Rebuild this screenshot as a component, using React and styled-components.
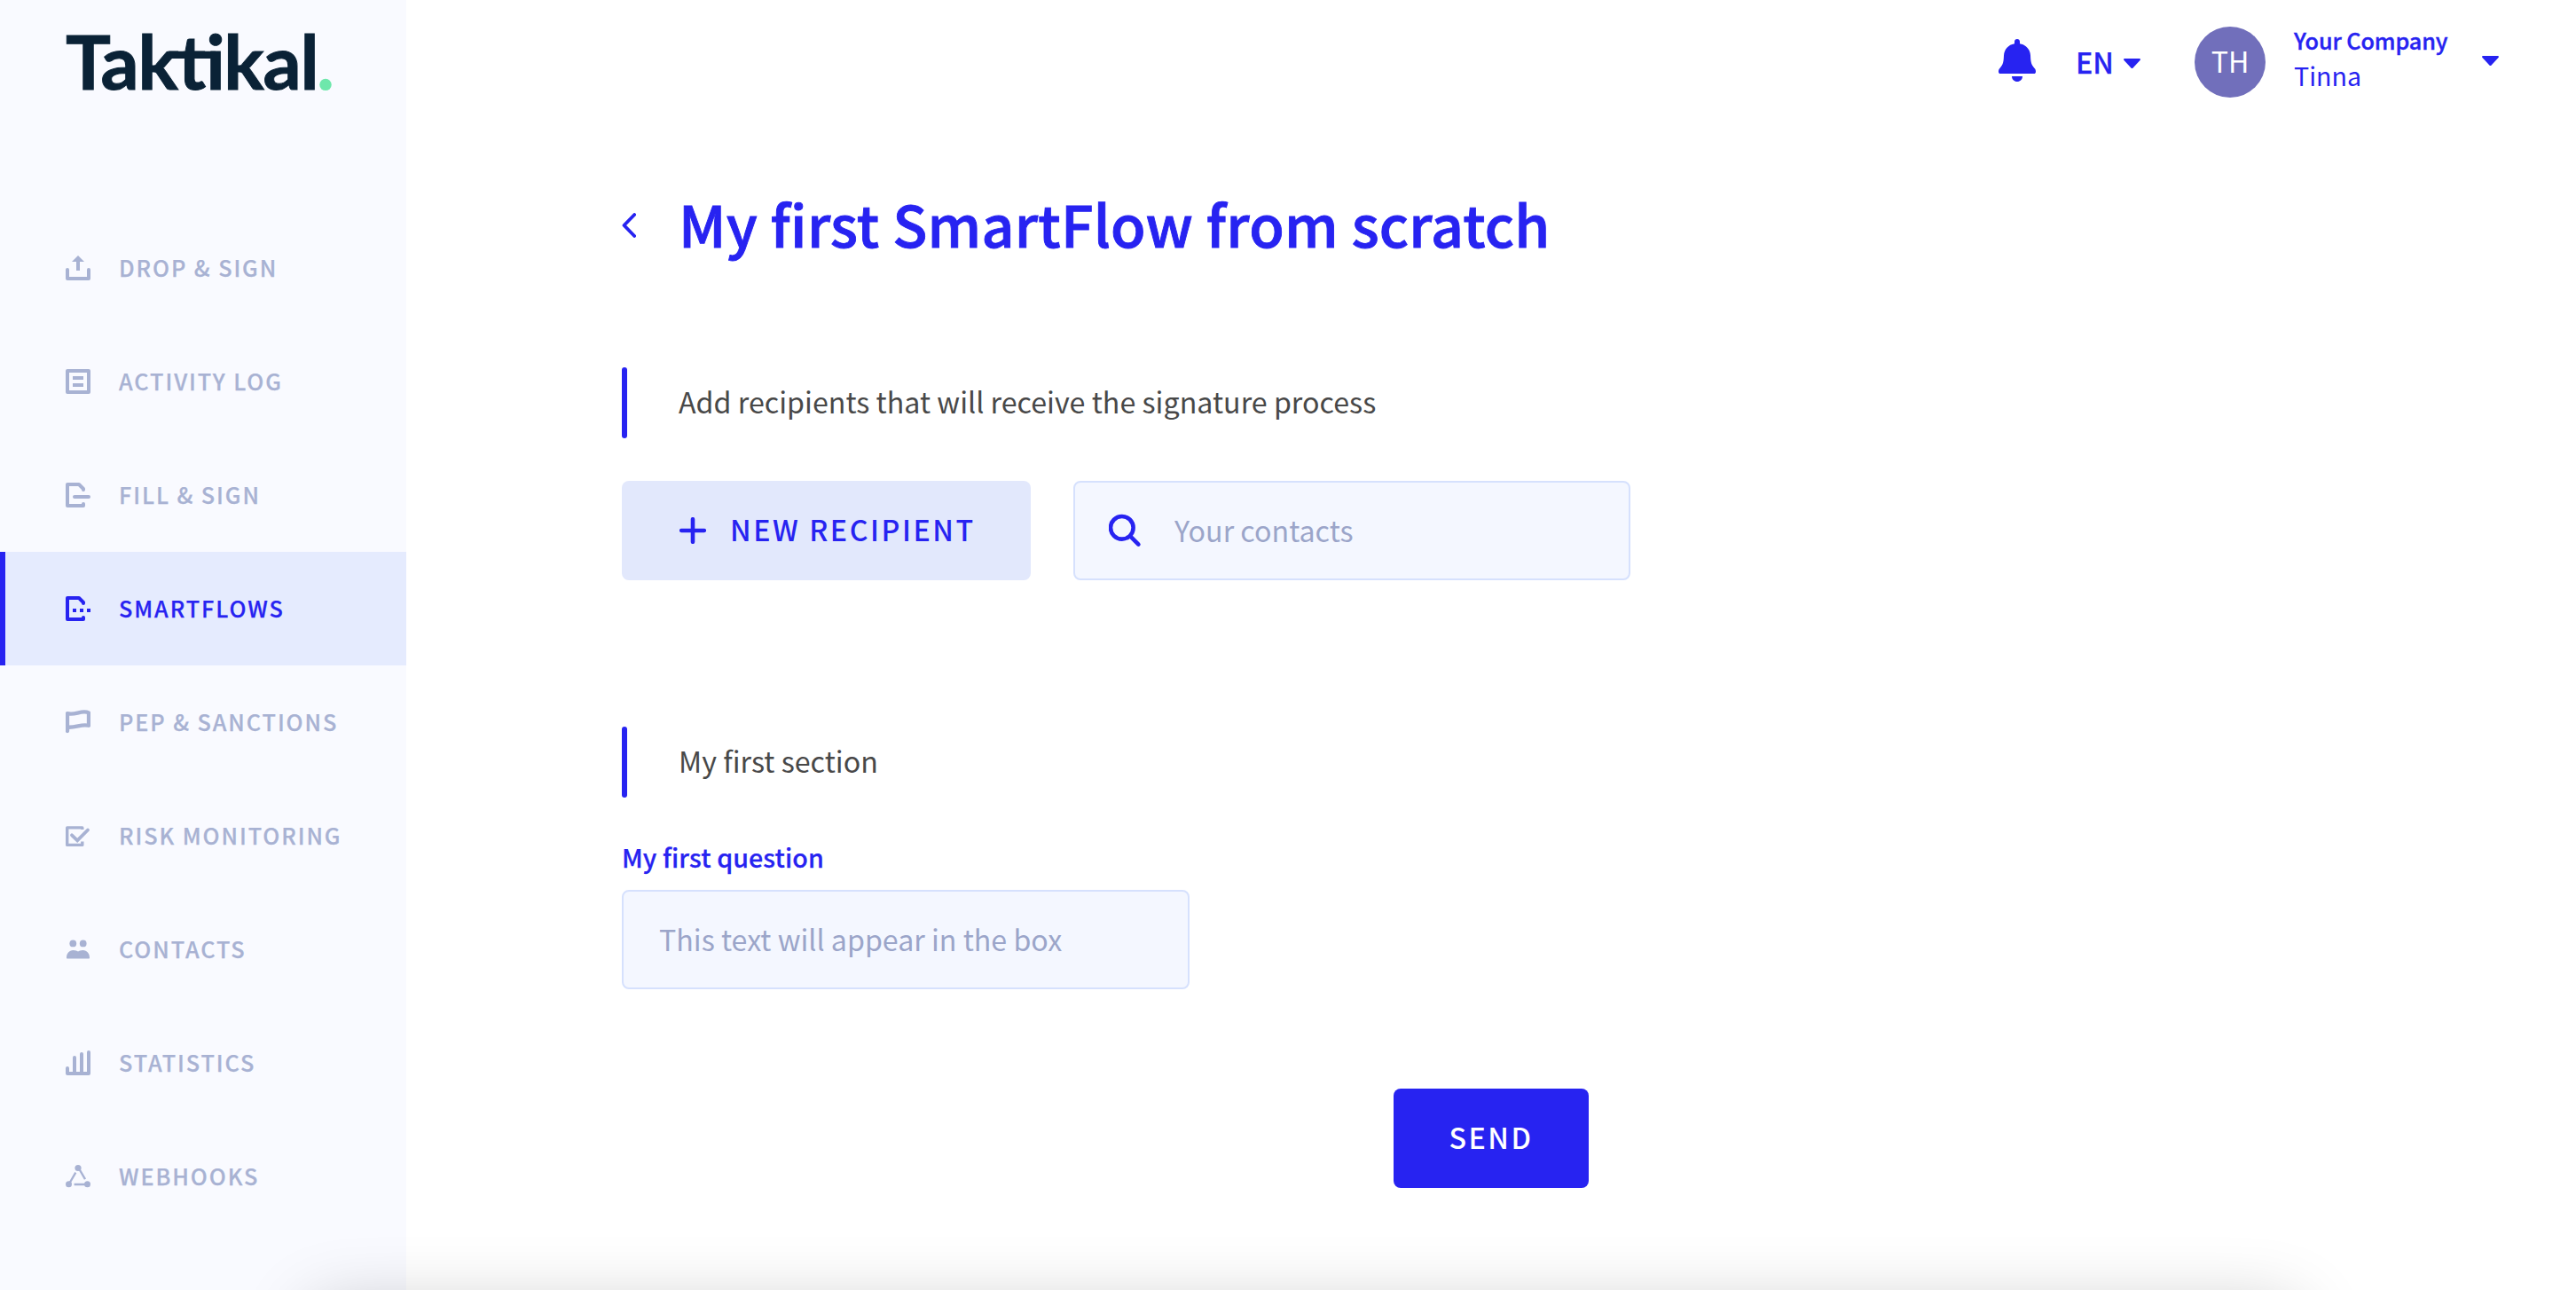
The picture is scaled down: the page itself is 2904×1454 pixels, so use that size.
import styled, { createGlobalStyle, css } from 'styled-components';

const colors = {
  primary: '#2723f1',
  muted: '#a8b2d3',
  placeholder: '#9ba5c9',
  text: '#484848',
  navy: '#0a2236',
  green: '#6ee7ab',
};

const GlobalStyle = createGlobalStyle`
  * {
    box-sizing: border-box;
  }
  html, body {
    margin: 0;
    padding: 0;
    background: #fff;
  }
  body, button, input {
    font-family: 'Noto Sans CJK SC', 'Source Sans Pro', sans-serif;
  }
`;

// a touch heavier than medium
const semibold = css`
  font-weight: 500;
  -webkit-text-stroke: 0.25px currentColor;
`;

const Page = styled.div`
  position: relative;
  display: flex;
  width: 2904px;
  height: 1454px;
  overflow: hidden;
  background: #fff;
`;

// sidebar
const Sidebar = styled.aside`
  flex: none;
  width: 458px;
  background: #f9faff;
`;

const LogoBox = styled.div`
  height: 238px;
  padding-left: 66px;
`;

const LogoSvg = styled.svg`
  display: block;
  overflow: visible;
  font-family: Lato, sans-serif;
  font-size: 85px;
  font-weight: 700;
`;

const Nav = styled.nav`
  display: flex;
  flex-direction: column;
`;

const NavItem = styled.a`
  display: flex;
  align-items: center;
  gap: 32px;
  height: 128px;
  padding-left: 68px;
  border-left: 6px solid transparent;
  color: ${colors.muted};
  font-size: 25.2px;
  letter-spacing: 1.94px;
  line-height: 36px;
  white-space: nowrap;
  ${semibold}

  ${props =>
    props.$active &&
    css`
      border-left-color: ${colors.primary};
      background: #e5ebfe;
      color: ${colors.primary};
    `}
`;

const NavLabel = styled.span`
  padding-bottom: 2px;
`;

const NavIcon = styled.svg`
  flex: none;
  width: 28px;
  height: 28px;
  fill: none;
  stroke: currentColor;
  stroke-width: 4;
`;

// header
const Main = styled.main`
  flex: 1;
  display: flex;
  flex-direction: column;
`;

const Header = styled.header`
  display: flex;
  align-items: center;
  justify-content: flex-end;
  height: 140px;
  padding-right: 87px;
  color: ${colors.primary};
`;

const Bell = styled.svg`
  width: 42px;
  height: 48px;
  margin: 0 45px 4px 0;
`;

const Language = styled.div`
  display: flex;
  align-items: center;
  justify-content: space-between;
  width: 73px;
  margin-right: 61px;
  padding-bottom: 3px;
  font-size: 32.2px;
  line-height: 46px;
  ${semibold}
`;

const Caret = styled.svg`
  width: 19px;
  height: 11px;
  margin-top: ${props => props.$shift}px;
`;

const Avatar = styled.div`
  display: flex;
  align-items: center;
  justify-content: center;
  width: 80px;
  height: 80px;
  margin-right: 32px;
  padding-bottom: 4px;
  border-radius: 50%;
  background: #716fbb;
  color: #fff;
  font-size: 32.2px;
  line-height: 40px;
`;

const UserNames = styled.div`
  width: 212px;
  padding-bottom: 10px;
  font-size: 28.6px;
  line-height: 39px;
  white-space: nowrap;
`;

const Company = styled.div`
  font-size: 25.2px;
  letter-spacing: -0.1px;
  ${semibold}
  -webkit-text-stroke-width: 0.4px;
`;

// content
const Content = styled.section`
  display: flex;
  flex-direction: column;
  align-items: flex-start;
  width: 1333px;
  padding: 71px 0 0 243px;
`;

const TitleRow = styled.div`
  display: flex;
  align-items: center;
  gap: 48px;
  height: 80px;
  margin-bottom: 123px;
  color: ${colors.primary};
`;

const BackIcon = styled.svg`
  width: 16px;
  height: 28px;
  margin-top: 6px;
`;

const Title = styled.h1`
  margin: 0 0 1px;
  font-size: 64.4px;
  letter-spacing: 0.22px;
  line-height: 80px;
  white-space: nowrap;
  ${semibold}
  -webkit-text-stroke-width: 0.9px;
`;

const SectionTitle = styled.div`
  display: flex;
  gap: 58px;
  height: 80px;
  color: ${colors.text};
  font-size: 32.2px;
  line-height: 76px;
  letter-spacing: 0.02px;

  &::before {
    content: '';
    width: 6px;
    border-radius: 3px;
    background: ${colors.primary};
  }
`;

const RecipientRow = styled.div`
  display: flex;
  gap: 48px;
  margin: 48px 0 165px;
`;

const Button = styled.button`
  display: flex;
  align-items: center;
  justify-content: ${props => (props.$solid ? 'center' : 'flex-start')};
  gap: 27px;
  width: ${props => props.$width}px;
  height: 112px;
  padding: ${props => (props.$solid ? '0 0 4px' : '0 0 4px 65px')};
  border: 0;
  border-radius: 8px;
  background: ${props => (props.$solid ? colors.primary : '#e2e8fc')};
  color: ${props => (props.$solid ? '#fff' : colors.primary)};
  font-size: 32.2px;
  font-weight: 500;
  letter-spacing: 2.55px;
  line-height: 46px;
  white-space: nowrap;

  svg {
    margin-top: 3px;
  }
`;

const SendButton = styled(Button)`
  align-self: flex-end;
  margin: 112px 0 0;
`;

const Field = styled.label`
  display: flex;
  align-items: center;
  width: ${props => props.$width}px;
  height: 112px;
  padding: 0 38px 0 ${props => props.$indent}px;
  border: 2px solid #d6e1fd;
  border-radius: 8px;
  background: #f4f7ff;
`;

const SearchIcon = styled.svg`
  flex: none;
  width: 38px;
  height: 38px;
  margin-right: 36px;
`;

const Input = styled.input`
  flex: 1;
  min-width: 0;
  height: 46px;
  margin-bottom: 3px;
  padding: 0;
  border: 0;
  outline: 0;
  background: transparent;
  color: ${colors.text};
  font-size: 32.2px;
  line-height: 46px;

  &::placeholder {
    color: ${colors.placeholder};
    opacity: 1;
  }
`;

const Question = styled.div`
  margin: 47px 0 17px;
  color: ${colors.primary};
  font-size: 28.6px;
  letter-spacing: 0.1px;
  line-height: 40px;
  ${semibold}
`;

// shadow of the panel that sits right under the fold
const BottomShadow = styled.div`
  position: absolute;
  top: 1474px;
  left: 350px;
  width: 2240px;
  height: 200px;
  border-radius: 20px;
  box-shadow: 0 0 80px rgba(0, 0, 0, 0.23);
  pointer-events: none;
`;

const navItems = [
  {
    label: 'DROP & SIGN',
    icon: (
      <>
        <path d='M2 16V26H26V16' strokeLinecap='round' strokeLinejoin='round' />
        <path d='M14 6V17' />
        <path d='M14 0L21 7H7Z' fill='currentColor' stroke='none' />
      </>
    ),
  },
  {
    label: 'ACTIVITY LOG',
    icon: <path d='M2 2H26V26H2ZM8 10H20M8 18H20' strokeLinejoin='round' />,
  },
  {
    label: 'FILL & SIGN',
    icon: (
      <path
        d='M20 8V7L15 2H2V26H20V24M10 16H26'
        strokeLinecap='round'
        strokeLinejoin='round'
      />
    ),
  },
  {
    label: 'SMARTFLOWS',
    active: true,
    icon: (
      <>
        <path d='M20 8V7L15 2H2V26H20V24' strokeLinecap='round' strokeLinejoin='round' />
        <path d='M8 16H12M16 16H20M24 16H28' />
      </>
    ),
  },
  {
    label: 'PEP & SANCTIONS',
    icon: (
      <path
        d='M2 24V4.2C10 6 14 2.4 21 2.4C23.5 2.4 25 2.8 26 3.3V17.8C18 15.5 12 20.5 2 19.7'
        strokeWidth='4.3'
        strokeLinecap='round'
        strokeLinejoin='round'
      />
    ),
  },
  {
    label: 'RISK MONITORING',
    icon: (
      <>
        <path d='M18.8 7V4.9H1.7V24.4H18.8V20.5' strokeWidth='3.4' strokeLinejoin='round' />
        <path d='M7 13.3L13.2 19.3L25 7.5' strokeLinecap='round' strokeWidth='3.8' />
      </>
    ),
  },
  {
    label: 'CONTACTS',
    icon: (
      <g fill='currentColor' stroke='none'>
        <circle cx='8.3' cy='7.4' r='3.9' />
        <circle cx='19.7' cy='7.4' r='3.9' />
        <path d='M2 24.6C1.3 24.6 1 24.3 1 23.6C1 18.5 4 15 8.5 15C11 15 13 15.8 14 16.6C15 15.8 17 15 19.5 15C24 15 27 18.5 27 23.6C27 24.3 26.7 24.6 26 24.6Z' />
      </g>
    ),
  },
  {
    label: 'STATISTICS',
    icon: (
      <path d='M2 20V26H26V2M10 25V8M18 25V4' strokeLinecap='round' strokeLinejoin='round' />
    ),
  },
  {
    label: 'WEBHOOKS',
    icon: (
      <>
        <path d='M5 20.5L11.3 9.6M15.5 6L22 17.2M9.6 23H24' strokeWidth='2.4' />
        <g fill='currentColor' stroke='none'>
          <circle cx='14' cy='4.5' r='3.6' />
          <circle cx='3.5' cy='22.8' r='3.5' />
          <circle cx='24.5' cy='22.8' r='3.5' />
        </g>
      </>
    ),
  },
];

function Logo() {
  return (
    <LogoSvg width='320' height='130' viewBox='66 0 320 130'>
      <text
        x='74 113.5 155.5 200.4 232.2 252.3 296.4 338.5'
        y='101'
        fill={colors.navy}
        stroke={colors.navy}
        strokeWidth='1'
      >
        Taktikal
      </text>
      {/* bar that ties the first k, the t and the i together */}
      <path d='M191 57.8H243V66H193Z' fill={colors.navy} />
      <circle cx='367' cy='95.4' r='6.7' fill={colors.green} />
    </LogoSvg>
  );
}

function CaretDown({ shift }) {
  return (
    <Caret $shift={shift} viewBox='0 0 19 11'>
      <path
        d='M1.2 0H17.8C18.9 0 19.3 1.2 18.5 2L10.6 10.4C10 11.1 9 11.1 8.4 10.4L.5 2C-.3 1.2 .1 0 1.2 0Z'
        fill='currentColor'
      />
    </Caret>
  );
}

export default function App() {
  return (
    <Page>
      <GlobalStyle />
      <Sidebar>
        <LogoBox>
          <Logo />
        </LogoBox>
        <Nav>
          {navItems.map(item => (
            <NavItem key={item.label} $active={item.active}>
              <NavIcon viewBox='0 0 28 28'>{item.icon}</NavIcon>
              <NavLabel>{item.label}</NavLabel>
            </NavItem>
          ))}
        </Nav>
      </Sidebar>

      <Main>
        <Header>
          <Bell viewBox='0 0 42 48' fill='currentColor'>
            <path d='M21 0C22.8 0 24 1.2 24 3V5.2C31 6.4 35.5 11.5 36 18.5C36.3 25 36.5 28.5 40.6 33C41.7 34.2 42 35.2 42 36.7C42 38.2 41.2 39 39.8 39H2.2C.8 39 0 38.2 0 36.7C0 35.2 .3 34.2 1.4 33C5.5 28.5 5.7 25 6 18.5C6.5 11.5 11 6.4 18 5.2V3C18 1.2 19.2 0 21 0Z' />
            <path d='M15 42H27C27 45.5 24.3 48 21 48C17.7 48 15 45.5 15 42Z' />
          </Bell>
          <Language>
            EN
            <CaretDown shift={5} />
          </Language>
          <Avatar>TH</Avatar>
          <UserNames>
            <Company>Your Company</Company>
            <div>Tinna</div>
          </UserNames>
          <CaretDown shift={-3} />
        </Header>

        <Content>
          <TitleRow>
            <BackIcon viewBox='0 0 16 28'>
              <path
                d='M14.2 2L2.5 14L14.2 26'
                fill='none'
                stroke='currentColor'
                strokeWidth='3.8'
                strokeLinecap='round'
                strokeLinejoin='round'
              />
            </BackIcon>
            <Title>My first SmartFlow from scratch</Title>
          </TitleRow>

          <SectionTitle>Add recipients that will receive the signature process</SectionTitle>
          <RecipientRow>
            <Button $width={461}>
              <svg width='30' height='30' viewBox='0 0 30 30'>
                <path
                  d='M15 2.2V27.8M2.2 15H27.8'
                  stroke='currentColor'
                  strokeWidth='4.6'
                  strokeLinecap='round'
                />
              </svg>
              NEW RECIPIENT
            </Button>
            <Field $width={628} $indent={38}>
              <SearchIcon viewBox='0 0 38 38' fill='none' stroke={colors.primary}>
                <circle cx='14.8' cy='15.8' r='12.8' strokeWidth='4.6' />
                <path d='M24.2 25.3L33.4 34.6' strokeWidth='4.6' strokeLinecap='round' />
              </SearchIcon>
              <Input placeholder='Your contacts' />
            </Field>
          </RecipientRow>

          <SectionTitle>My first section</SectionTitle>
          <Question>My first question</Question>
          <Field $width={640} $indent={40}>
            <Input placeholder='This text will appear in the box' />
          </Field>
          <SendButton $solid $width={220}>
            SEND
          </SendButton>
        </Content>
      </Main>
      <BottomShadow />
    </Page>
  );
}
